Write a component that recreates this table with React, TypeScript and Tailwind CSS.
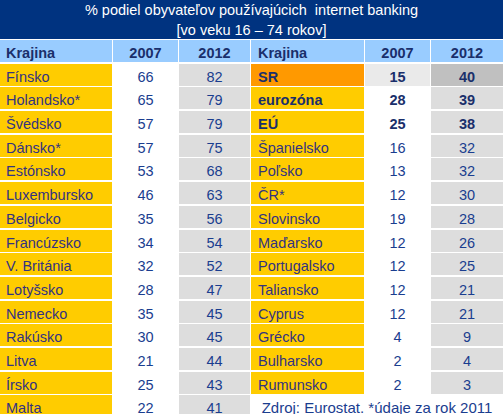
const left = [
  ["Fínsko", "66", "82"],
  ["Holandsko*", "65", "79"],
  ["Švédsko", "57", "79"],
  ["Dánsko*", "57", "75"],
  ["Estónsko", "53", "68"],
  ["Luxembursko", "46", "63"],
  ["Belgicko", "35", "56"],
  ["Francúzsko", "34", "54"],
  ["V. Británia", "32", "52"],
  ["Lotyšsko", "28", "47"],
  ["Nemecko", "35", "45"],
  ["Rakúsko", "30", "45"],
  ["Litva", "21", "44"],
  ["Írsko", "25", "43"],
  ["Malta", "22", "41"],
];

const right = [
  ["SR", "15", "40"],
  ["eurozóna", "28", "39"],
  ["EÚ", "25", "38"],
  ["Španielsko", "16", "32"],
  ["Poľsko", "13", "32"],
  ["ČR*", "12", "30"],
  ["Slovinsko", "19", "28"],
  ["Maďarsko", "12", "26"],
  ["Portugalsko", "12", "25"],
  ["Taliansko", "12", "21"],
  ["Cyprus", "12", "21"],
  ["Grécko", "4", "9"],
  ["Bulharsko", "2", "4"],
  ["Rumunsko", "2", "3"],
];

const cell = "leading-[20px] pt-[3px] overflow-hidden whitespace-nowrap";

export default function App() {
  const rows = [];
  for (let i = 0; i < 15; i++) {
    const l = left[i];
    const r = right[i];
    const sr = i === 0;
    const bold = i < 3;
    rows.push(
      <div key={"l" + i} className={`${cell} bg-[#ffcc00] pl-[6px] text-[#333380]`}>
        {l[0]}
      </div>,
      <div key={"l1" + i} className={`${cell} bg-white text-center text-[#1a3d8f]`}>
        {l[1]}
      </div>,
      <div key={"l2" + i} className={`${cell} bg-[#dddddd] text-center text-[#1a3d8f]`}>
        {l[2]}
      </div>
    );
    if (r) {
      rows.push(
        <div
          key={"r" + i}
          className={`${cell} pl-[7px] ${sr ? "bg-[#ff9900]" : "bg-[#ffcc00]"} ${
            bold ? "font-bold text-[#1a2f6b]" : "text-[#333380]"
          }`}
        >
          {r[0]}
        </div>,
        <div
          key={"r1" + i}
          className={`${cell} text-center ${sr ? "bg-[#eaeaea]" : "bg-white"} ${
            bold ? "font-bold text-[#1a2f6b]" : "text-[#1a3d8f]"
          }`}
        >
          {r[1]}
        </div>,
        <div
          key={"r2" + i}
          className={`${cell} text-center ${sr ? "bg-[#c0c0c0]" : "bg-[#dddddd]"} ${
            bold ? "font-bold text-[#1a2f6b]" : "text-[#1a3d8f]"
          }`}
        >
          {r[2]}
        </div>
      );
    } else {
      rows.push(
        <div key="src" className={`${cell} col-span-3 text-center text-[#1a3d8f] text-[15px]`}>
          Zdroj: Eurostat. *údaje za rok 2011
        </div>
      );
    }
  }

  return (
    <div className="w-[503px] bg-white text-[14.5px] font-['Liberation_Sans',Arial,sans-serif]">
      <div className="h-[39px] bg-[#003380] text-white text-center leading-[20px]">
        <div>% podiel obyvateľov používajúcich&nbsp; internet banking</div>
        <div>[vo veku 16 – 74 rokov]</div>
      </div>
      <div className="mt-px grid grid-cols-[112px_65px_71px_113px_65px_1fr] auto-rows-[22px] gap-x-px gap-y-[1.7px]">
        <div className={`${cell} bg-[#99ccff] pl-[6px] font-bold text-[#1a2f6b]`}>Krajina</div>
        <div className={`${cell} bg-[#99ccff] text-center font-bold text-[#1a2f6b]`}>2007</div>
        <div className={`${cell} bg-[#99ccff] text-center font-bold text-[#1a2f6b]`}>2012</div>
        <div className={`${cell} bg-[#99ccff] pl-[7px] font-bold text-[#1a2f6b]`}>Krajina</div>
        <div className={`${cell} bg-[#99ccff] text-center font-bold text-[#1a2f6b]`}>2007</div>
        <div className={`${cell} bg-[#99ccff] text-center font-bold text-[#1a2f6b]`}>2012</div>
        {rows}
      </div>
    </div>
  );
}
